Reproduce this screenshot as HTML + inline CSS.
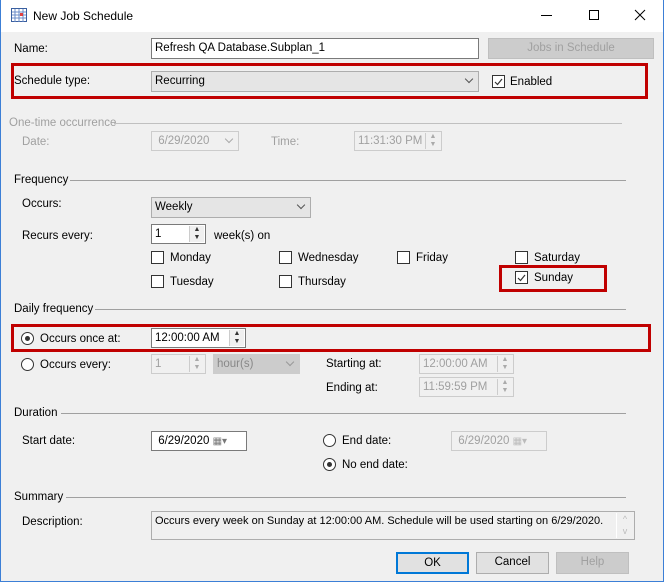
<!DOCTYPE html>
<html><head><style>
*{box-sizing:border-box;margin:0;padding:0}
body{width:664px;height:582px;background:#f0f0f0;font-family:"Liberation Sans",sans-serif;font-size:11.5px;color:#000;position:relative;overflow:hidden}
.a{position:absolute;white-space:nowrap}
.t{line-height:14px}
.g{color:#a0a0a0}
.box{position:absolute;background:#fff;border:1px solid #7a7a7a;padding:2px 3px;line-height:14px;white-space:nowrap;overflow:hidden}
.dis{background:#f0f0f0;border-color:#ccc;color:#a0a0a0}
.cmb{position:absolute;background:#e5e5e5;border:1px solid #adadad;padding:2px 3px;line-height:14px}
.red{position:absolute;border:3px solid #c00000}
.line{position:absolute;height:1px;background:#a0a0a0}
.cb{position:absolute;width:13px;height:13px;border:1px solid #333;background:#fff}
.rb{position:absolute;width:13px;height:13px;border:1px solid #333;border-radius:50%;background:#fff}
.rb.on::after{content:"";position:absolute;left:3px;top:3px;width:5px;height:5px;border-radius:50%;background:#333}
.spin{position:absolute;right:1px;top:1px;bottom:1px;width:15px;border-left:1px solid #ccc;background:#f0f0f0;font-size:7px;line-height:8px;text-align:center;color:#333}
.chev{position:absolute;right:6px;top:4px;width:6px;height:6px;border-right:1px solid #555;border-bottom:1px solid #555;transform:rotate(45deg)}
.btn{position:absolute;border:1px solid #adadad;background:#e1e1e1;text-align:center;line-height:19px}
</style></head><body>
<div class="a" style="left:0;top:0;width:664px;height:32px;background:#fff"></div>
<div class="a" style="left:0;top:0;width:1px;height:582px;background:#3c7fd6"></div>
<div class="a" style="right:0;top:0;width:1px;height:582px;background:#3c7fd6"></div>
<div class="a" style="left:0;bottom:0;width:664px;height:1px;background:#3c7fd6"></div>
<svg class="a" style="left:11px;top:8px" width="16" height="14"><rect x=".5" y=".5" width="15" height="13" fill="#fff" stroke="#3a5fa0"/><path d="M1 4h14M1 7h14M1 10h14M4 1v13M8 1v13M12 1v13" stroke="#6b8cc8"/><rect x="9" y="5" width="3" height="3" fill="#e04040"/></svg>
<div class="a t" style="left:33px;top:9px;font-size:12px">New Job Schedule</div>
<div class="a" style="left:541px;top:15px;width:11px;height:1px;background:#000"></div>
<div class="a" style="left:589px;top:10px;width:10px;height:10px;border:1px solid #000"></div>
<svg class="a" style="left:634px;top:9px" width="12" height="12"><path d="M1 1L11 11M11 1L1 11" stroke="#000" stroke-width="1"/></svg>

<div class="a t" style="left:14px;top:42px">Name:</div>
<div class="box" style="left:151px;top:38px;width:328px;height:21px">Refresh QA Database.Subplan_1</div>
<div class="btn" style="left:488px;top:38px;width:166px;height:21px;background:#ccc;border-color:#bfbfbf;color:#a0a0a0">Jobs in Schedule</div>

<div class="red" style="left:11px;top:63px;width:637px;height:36px"></div>
<div class="a t" style="left:14px;top:74px">Schedule type:</div>
<div class="cmb" style="left:151px;top:71px;width:328px;height:21px">Recurring<span class="chev"></span></div>
<div class="cb" style="left:492px;top:75px;border-color:#333">
<svg width="11" height="11" style="position:absolute;left:0;top:0"><path d="M2 6l2.5 2.5L9 3" stroke="#333" fill="none" stroke-width="1.2"/></svg></div>
<div class="a t" style="left:510px;top:75px">Enabled</div>

<div class="a t g" style="left:9px;top:116px">One-time occurrence</div>
<div class="line" style="left:114px;top:123px;width:508px;background:#c0c0c0"></div>
<div class="a t g" style="left:22px;top:135px">Date:</div>
<div class="box dis" style="left:151px;top:131px;width:88px;height:20px">&nbsp;6/29/2020<span class="chev" style="border-color:#aaa"></span></div>
<div class="a t g" style="left:271px;top:135px">Time:</div>
<div class="box dis" style="left:354px;top:131px;width:88px;height:20px">11:31:30 PM<span class="spin" style="color:#aaa">▲<br>▼</span></div>

<div class="a t" style="left:14px;top:173px">Frequency</div>
<div class="line" style="left:70px;top:180px;width:556px"></div>
<div class="a t" style="left:22px;top:197px">Occurs:</div>
<div class="cmb" style="left:151px;top:197px;width:160px;height:21px">Weekly<span class="chev"></span></div>
<div class="a t" style="left:22px;top:229px">Recurs every:</div>
<div class="box" style="left:151px;top:224px;width:55px;height:20px">1<span class="spin">▲<br>▼</span></div>
<div class="a t" style="left:214px;top:229px">week(s) on</div>

<div class="cb" style="left:151px;top:251px"></div><div class="a t" style="left:170px;top:251px">Monday</div>
<div class="cb" style="left:279px;top:251px"></div><div class="a t" style="left:298px;top:251px">Wednesday</div>
<div class="cb" style="left:397px;top:251px"></div><div class="a t" style="left:416px;top:251px">Friday</div>
<div class="cb" style="left:515px;top:251px"></div><div class="a t" style="left:534px;top:251px">Saturday</div>
<div class="cb" style="left:151px;top:275px"></div><div class="a t" style="left:170px;top:275px">Tuesday</div>
<div class="cb" style="left:279px;top:275px"></div><div class="a t" style="left:298px;top:275px">Thursday</div>
<div class="red" style="left:499px;top:265px;width:108px;height:27px"></div>
<div class="cb" style="left:515px;top:271px"><svg width="11" height="11" style="position:absolute;left:0;top:0"><path d="M2 6l2.5 2.5L9 3" stroke="#333" fill="none" stroke-width="1.2"/></svg></div>
<div class="a t" style="left:534px;top:271px">Sunday</div>

<div class="a t" style="left:14px;top:302px">Daily frequency</div>
<div class="line" style="left:95px;top:309px;width:531px"></div>
<div class="red" style="left:11px;top:324px;width:640px;height:28px"></div>
<div class="rb on" style="left:21px;top:332px"></div>
<div class="a t" style="left:40px;top:332px">Occurs once at:</div>
<div class="box" style="left:151px;top:328px;width:95px;height:20px">12:00:00 AM<span class="spin">▲<br>▼</span></div>
<div class="rb" style="left:21px;top:358px"></div>
<div class="a t" style="left:40px;top:358px">Occurs every:</div>
<div class="box dis" style="left:151px;top:354px;width:55px;height:20px">1<span class="spin" style="color:#aaa">▲<br>▼</span></div>
<div class="cmb" style="left:213px;top:354px;width:87px;height:20px;background:#ccc;border-color:#ccc;color:#888">hour(s)<span class="chev" style="border-color:#999"></span></div>
<div class="a t" style="left:326px;top:357px">Starting at:</div>
<div class="box dis" style="left:419px;top:354px;width:95px;height:20px">12:00:00 AM<span class="spin" style="color:#aaa">▲<br>▼</span></div>
<div class="a t" style="left:326px;top:381px">Ending at:</div>
<div class="box dis" style="left:419px;top:377px;width:95px;height:20px">11:59:59 PM<span class="spin" style="color:#aaa">▲<br>▼</span></div>

<div class="a t" style="left:14px;top:406px">Duration</div>
<div class="line" style="left:61px;top:413px;width:565px"></div>
<div class="a t" style="left:22px;top:434px">Start date:</div>
<div class="box" style="left:151px;top:431px;width:96px;height:20px">&nbsp;6/29/2020 <span style="color:#777;font-size:10px">▦▾</span></div>
<div class="rb" style="left:323px;top:434px"></div>
<div class="a t" style="left:342px;top:434px">End date:</div>
<div class="box dis" style="left:451px;top:431px;width:96px;height:20px">&nbsp;6/29/2020 <span style="color:#bbb;font-size:10px">▦▾</span></div>
<div class="rb on" style="left:323px;top:458px"></div>
<div class="a t" style="left:342px;top:458px">No end date:</div>

<div class="a t" style="left:14px;top:490px">Summary</div>
<div class="line" style="left:66px;top:497px;width:560px"></div>
<div class="a t" style="left:22px;top:515px">Description:</div>
<div class="box" style="left:151px;top:511px;width:484px;height:29px;background:#f0f0f0;border-color:#adadad;font-size:11px">Occurs every week on Sunday at 12:00:00 AM. Schedule will be used starting on 6/29/2020.<span class="a" style="right:1px;top:1px;bottom:1px;width:17px;background:#f0f0f0;border-left:1px solid #fff;color:#bbb;font-size:9px;text-align:center;line-height:12px">^<br>v</span></div>

<div class="btn" style="left:396px;top:552px;width:73px;height:22px;border:2px solid #0078d7">OK</div>
<div class="btn" style="left:476px;top:552px;width:73px;height:22px">Cancel</div>
<div class="btn" style="left:556px;top:552px;width:73px;height:22px;background:#ccc;border-color:#bfbfbf;color:#a0a0a0">Help</div>
</body></html>
